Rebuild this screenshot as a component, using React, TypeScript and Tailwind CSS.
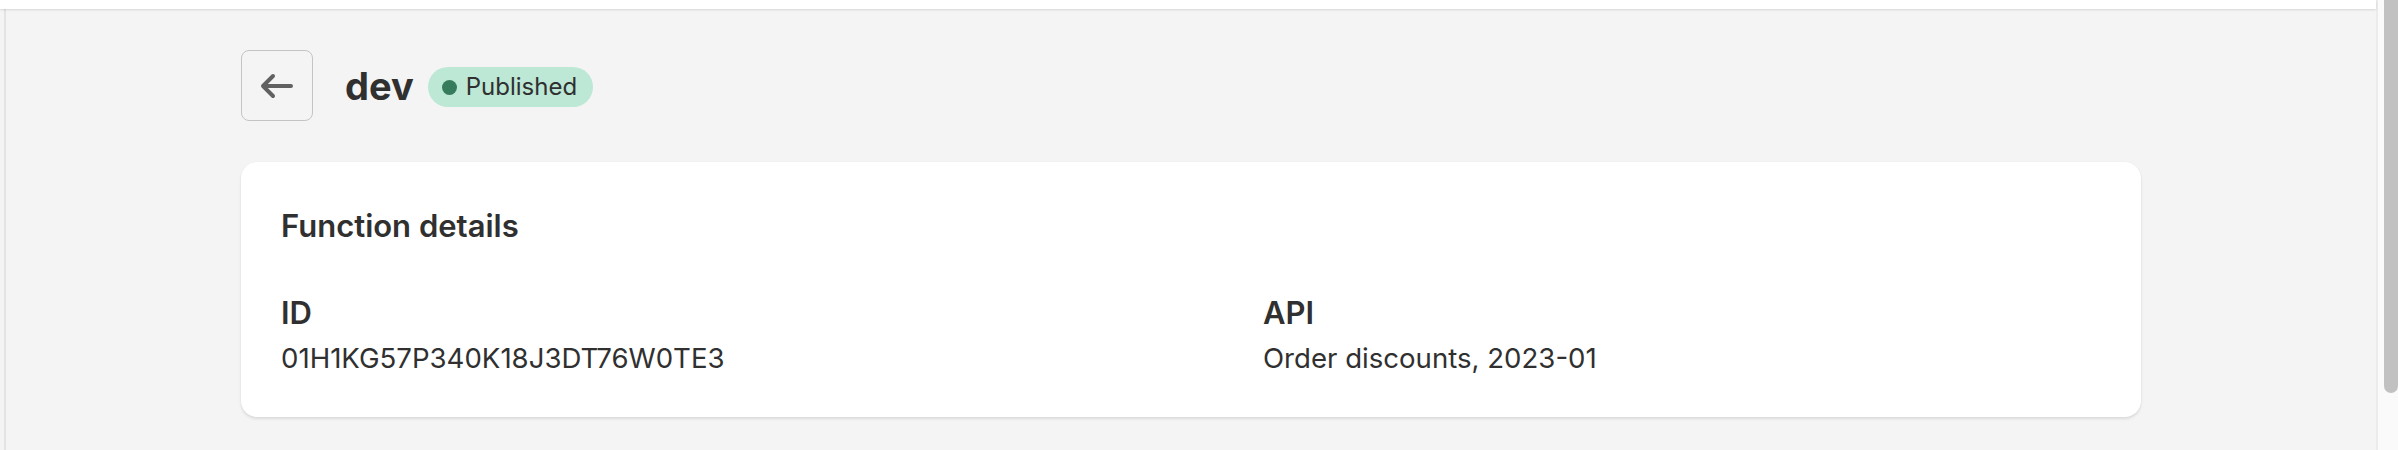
import React from "react";

const font = "font-['Inter','Noto_Sans',sans-serif]";

function BackArrow() {
  return (
    <svg width="36" height="28" viewBox="0 0 36 28" fill="none">
      <path
        d="M4 14H32M14 4L4 14L14 24"
        stroke="#616161"
        strokeWidth="4"
        strokeLinecap="round"
        strokeLinejoin="round"
      />
    </svg>
  );
}

function Field({ label, value }: { label: string; value: string }) {
  return (
    <div className="flex flex-col gap-[5px]">
      <span className="text-[31px] leading-[40px] font-semibold text-[#303030]">{label}</span>
      <span className="text-[27.6px] leading-[40px] text-[#303030]">{value}</span>
    </div>
  );
}

export default function App() {
  return (
    <div className={`${font} flex h-[450px] w-full overflow-hidden bg-[#f4f4f4]`}>
      {/* main column */}
      <div className="flex w-[2376px] flex-col">
        <div className="relative z-10 h-[9px] bg-white shadow-[0_1px_2px_rgba(0,0,0,0.12)]" />
        <div className="flex flex-1">
          <div className="ml-[4px] w-[2px] bg-[#e3e3e3]" />
          <div className="flex flex-col pl-[235px] pt-[41px]">
            {/* header */}
            <div className="flex items-center">
              <button className="flex h-[71px] w-[72px] items-center justify-center rounded-[8px] border-[1.5px] border-[#c4c4c4]">
                <BackArrow />
              </button>
              <h1 className="ml-[32px] text-[38px] leading-[48px] font-[650] text-[#303030]">dev</h1>
              <span className="ml-[14px] mt-[3px] flex h-[40px] items-center gap-[9px] rounded-full bg-[#bce8d5] pl-[14px] pr-[16px]">
                <span className="h-[15px] w-[15px] rounded-full bg-[#367c5c]" />
                <span className="text-[24px] leading-[32px] text-[#303030]">Published</span>
              </span>
            </div>

            {/* card */}
            <div className="mt-[41px] flex w-[1900px] flex-col rounded-[16px] bg-white px-[40px] pb-[39px] pt-[40px] shadow-[0_2px_3px_rgba(0,0,0,0.1),0_0_1px_rgba(0,0,0,0.08)]">
              <h2 className="text-[31px] leading-[48px] font-semibold text-[#303030]">Function details</h2>
              <div className="mt-[43px] grid grid-cols-[982px_1fr]">
                <Field label="ID" value="01H1KG57P340K18J3DT76W0TE3" />
                <Field label="API" value="Order discounts, 2023-01" />
              </div>
            </div>
          </div>
        </div>
      </div>

      {/* scrollbar */}
      <div className="flex w-[22px] border-l-2 border-[#ebebeb] bg-[#fafafa] pl-[6px]">
        <div className="h-[393px] w-[14px] rounded-b-full bg-[#c1c1c1]" />
      </div>
    </div>
  );
}
